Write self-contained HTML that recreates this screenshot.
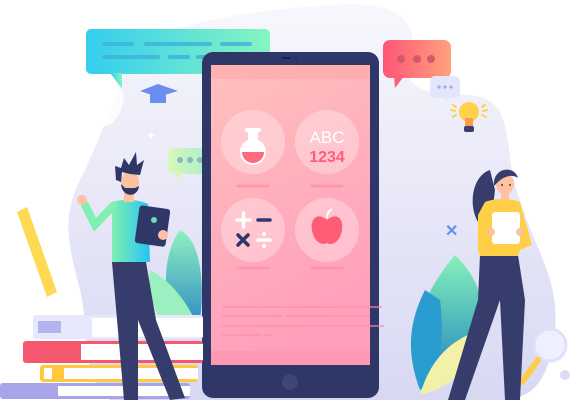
<!DOCTYPE html>
<html><head><meta charset="utf-8"><style>
html,body{margin:0;padding:0;background:#fff;width:576px;height:400px;overflow:hidden}
svg{display:block}
</style></head><body>
<svg width="576" height="400" viewBox="0 0 576 400" xmlns="http://www.w3.org/2000/svg" font-family="Liberation Sans, sans-serif">
<defs>
<linearGradient id="bg" x1="0" y1="0" x2="0" y2="1"><stop offset="0" stop-color="#f7f7fd"/><stop offset="1" stop-color="#d8d8f3"/></linearGradient>
<linearGradient id="scr" x1="0" y1="0" x2="0.3" y2="1"><stop offset="0" stop-color="#ffc0bd"/><stop offset="1" stop-color="#ff9fbb"/></linearGradient>
<linearGradient id="teal" x1="0" y1="0" x2="1" y2="0"><stop offset="0" stop-color="#35cdf0"/><stop offset="1" stop-color="#86f5bf"/></linearGradient>
<linearGradient id="red" x1="0" y1="0" x2="1" y2="0"><stop offset="0" stop-color="#ff5577"/><stop offset="1" stop-color="#ffa27d"/></linearGradient>
<linearGradient id="shirt" x1="0" y1="0" x2="1" y2="0"><stop offset="0" stop-color="#7ef0b0"/><stop offset="1" stop-color="#28c3f5"/></linearGradient>
<linearGradient id="leaf" x1="0" y1="0" x2="0" y2="1"><stop offset="0" stop-color="#86f2b8"/><stop offset="1" stop-color="#2288c0"/></linearGradient>
<linearGradient id="bub2" x1="0" y1="0" x2="1" y2="0"><stop offset="0" stop-color="#d8f7b8"/><stop offset="1" stop-color="#a8eecf"/></linearGradient>
</defs>
<path d="M130 60 C160 20 260 10 330 5 C400 0 420 20 410 60 C400 90 430 95 470 95 C520 100 500 150 520 200 C535 250 560 280 555 330 C550 370 540 400 500 400 L110 400 C80 380 90 330 80 290 C70 250 60 220 80 180 C95 150 110 110 130 60 Z" fill="url(#bg)"/>
<ellipse cx="110" cy="105" rx="12" ry="22" fill="#fff" opacity=".8" transform="rotate(20 110 105)"/>
<rect x="86" y="29" width="184" height="45" rx="5" fill="url(#teal)"/>
<path d="M110 73 L122 73 L122 89 Z" fill="url(#teal)"/>
<g stroke="#3fb4dc" stroke-width="4" stroke-linecap="round" opacity=".85">
<line x1="104" y1="44" x2="132" y2="44"/><line x1="146" y1="44" x2="210" y2="44"/><line x1="222" y1="44" x2="250" y2="44"/>
<line x1="104" y1="57" x2="158" y2="57"/><line x1="170" y1="57" x2="188" y2="57"/><line x1="198" y1="57" x2="228" y2="57"/><line x1="238" y1="57" x2="250" y2="57"/>
</g>
<path d="M140 91 L158 84 L178 91 L158 97 Z" fill="#6b8cf0"/><rect x="150" y="93" width="16" height="10" fill="#6b8cf0"/>
<text x="146" y="140" font-size="12" fill="#fff">✦</text>
<rect x="168" y="148" width="44" height="26" rx="6" fill="url(#bub2)"/>
<path d="M175 172 L183 172 L176 180Z" fill="#d8f7b8"/>
<g fill="#8ab8c0"><circle cx="180" cy="160" r="3"/><circle cx="190" cy="160" r="3"/><circle cx="200" cy="160" r="3"/></g>
<rect x="383" y="40" width="68" height="38" rx="7" fill="url(#red)"/>
<path d="M394 76 L404 76 L395 88Z" fill="#ff5d77"/>
<g fill="#d05a6a"><circle cx="401" cy="59" r="4"/><circle cx="417" cy="59" r="4"/><circle cx="431" cy="59" r="4"/></g>
<rect x="430" y="76" width="30" height="22" rx="5" fill="#e4e6fb"/>
<path d="M442 97 L450 97 L446 101Z" fill="#e4e6fb"/>
<g fill="#a7a9ea"><circle cx="439" cy="87" r="1.6"/><circle cx="445" cy="87" r="1.6"/><circle cx="451" cy="87" r="1.6"/></g>
<circle cx="469" cy="112" r="10" fill="#ffd24a"/><rect x="465" y="118" width="8" height="8" fill="#ff9a4a"/><rect x="464" y="126" width="10" height="6" rx="2" fill="#3a3f70"/>
<g stroke="#ffd24a" stroke-width="2" stroke-linecap="round"><line x1="451" y1="110" x2="455" y2="111"/><line x1="453" y1="117" x2="456" y2="115"/><line x1="483" y1="111" x2="487" y2="110"/><line x1="482" y1="115" x2="486" y2="117"/><line x1="453" y1="105" x2="456" y2="107"/><line x1="482" y1="107" x2="485" y2="105"/></g>
<path d="M455 255 C430 285 410 320 420 370 C440 390 470 360 480 320 C485 290 470 270 455 255Z" fill="url(#leaf)"/>
<path d="M425 290 C410 320 405 350 420 390 C440 380 445 340 440 300Z" fill="#2a9ccf"/>
<path d="M420 395 C430 360 450 340 480 330 C475 360 460 385 420 395Z" fill="#f3f0a8"/>
<circle cx="550" cy="345" r="16" fill="#eef0ff" stroke="#dfe1fa" stroke-width="3"/>
<line x1="538" y1="360" x2="522" y2="382" stroke="#ffcc44" stroke-width="6" stroke-linecap="round"/>
<circle cx="565" cy="375" r="5" fill="#dcdcf5"/>
<text x="445" y="236" font-size="16" font-weight="bold" fill="#6b8cf0">✕</text>
<!-- phone -->
<rect x="202" y="52" width="177" height="346" rx="11" fill="#2f3768"/>
<rect x="211" y="65" width="159" height="300" fill="url(#scr)"/>
<rect x="211" y="65" width="159" height="14" fill="#ffa6a6" opacity=".6"/>
<rect x="211" y="351" width="159" height="14" fill="#ff92b0" opacity=".6"/>
<rect x="282" y="57" width="9" height="2" rx="1" fill="#1c2246"/><circle cx="296" cy="58" r="1" fill="#1c2246"/>
<circle cx="290" cy="382" r="8" fill="#3d4677"/>
<g fill="#fff" opacity=".3"><circle cx="253" cy="142" r="32"/><circle cx="327" cy="142" r="32"/><circle cx="253" cy="230" r="32"/><circle cx="327" cy="230" r="32"/></g>
<g stroke="#ff8ea4" stroke-width="3" stroke-linecap="round" opacity=".7">
<line x1="238" y1="186" x2="268" y2="186"/><line x1="312" y1="186" x2="342" y2="186"/><line x1="238" y1="268" x2="268" y2="268"/><line x1="312" y1="268" x2="342" y2="268"/></g>
<g stroke="#ff8ea4" stroke-width="2" opacity=".6"><line x1="222" y1="307" x2="382" y2="307"/><line x1="222" y1="316" x2="282" y2="316"/><line x1="286" y1="316" x2="370" y2="316"/><line x1="222" y1="326" x2="384" y2="326"/><line x1="222" y1="335" x2="262" y2="335"/><line x1="265" y1="335" x2="272" y2="335"/></g>
<circle cx="253" cy="152" r="13" fill="#fff"/><rect x="248" y="131" width="10" height="12" fill="#fff"/><rect x="245" y="128" width="16" height="4" rx="2" fill="#fff"/>
<path d="M242 152 A11 11 0 0 0 264 152 Z" fill="#ff6b7a"/>
<text x="327" y="143" font-size="17" fill="#fff" text-anchor="middle">ABC</text>
<text x="327" y="162" font-size="16" font-weight="bold" fill="#ff5c77" text-anchor="middle">1234</text>
<g stroke-linecap="round" stroke-width="3.5">
<line x1="237" y1="220" x2="250" y2="220" stroke="#fff"/><line x1="243.5" y1="213" x2="243.5" y2="227" stroke="#fff"/>
<line x1="258" y1="220" x2="270" y2="220" stroke="#2f3768"/>
<line x1="238" y1="235" x2="248" y2="245" stroke="#2f3768"/><line x1="248" y1="235" x2="238" y2="245" stroke="#2f3768"/>
<line x1="258" y1="240" x2="270" y2="240" stroke="#fff"/></g>
<circle cx="264" cy="234" r="2" fill="#fff"/><circle cx="264" cy="246" r="2" fill="#fff"/>
<path d="M327 220 C318 212 310 218 312 230 C314 242 322 246 327 243 C332 246 340 242 342 230 C344 218 336 212 327 220Z" fill="#ff5c77"/>
<path d="M327 218 C327 212 330 210 332 209" stroke="#fff" stroke-width="2" fill="none"/>
<!-- left plant -->
<path d="M180 230 C200 240 205 280 200 320 L175 320 C160 290 165 250 180 230Z" fill="url(#leaf)" opacity=".9"/>
<path d="M150 270 C170 280 185 300 195 320 L160 320 C150 300 148 285 150 270Z" fill="#9cf0c0"/>
<polygon points="17,212 27,207 57,292 47,297" fill="#ffd952"/>
<!-- books -->
<rect x="33" y="315" width="170" height="24" rx="3" fill="#e6e8fb"/><rect x="92" y="318" width="111" height="19" fill="#fff"/><rect x="38" y="321" width="23" height="12" fill="#b3b3f0"/>
<rect x="23" y="341" width="180" height="22" rx="3" fill="#f5576f"/><rect x="81" y="344" width="122" height="16" fill="#fff"/>
<rect x="40" y="365" width="158" height="17" rx="3" fill="#ffc83d"/><rect x="64" y="368" width="134" height="11" fill="#fff"/><rect x="44" y="368" width="8" height="11" fill="#fff"/>
<rect x="0" y="383" width="190" height="16" rx="3" fill="#a8a4ea"/><rect x="58" y="386" width="132" height="10" fill="#fff"/>
<!-- man -->
<path d="M112 262 L146 262 L156 320 L185 398 L170 400 L138 320 L138 400 L124 400 Z" fill="#363c6c"/>
<path d="M112 202 C125 198 140 200 148 204 L150 262 L112 262 Z" fill="url(#shirt)"/>
<path d="M113 206 L95 225 L85 205" stroke="#7ef0b0" stroke-width="8" fill="none" stroke-linecap="round"/>
<circle cx="82" cy="200" r="5" fill="#ffc1a0"/>
<rect x="137" y="207" width="31" height="38" rx="3" fill="#2f3768" transform="rotate(8 152 226)"/>
<circle cx="154" cy="220" r="3" fill="#66e0b0"/>
<circle cx="163" cy="235" r="5" fill="#ffc1a0"/>
<rect x="124" y="190" width="10" height="12" fill="#ffc1a0"/>
<ellipse cx="130" cy="182" rx="9" ry="11" fill="#ffc1a0"/>
<path d="M121 184 C122 198 138 198 139 186 L135 188 L125 188 Z" fill="#2f3768"/>
<path d="M116 180 L115 166 L121 168 L124 158 L129 165 L136 152 L137 165 L144 160 L140 175 L130 174 L122 172 L121 182Z" fill="#2f3768"/>
<!-- woman -->
<path d="M490 170 C472 176 468 205 478 222 L492 215 L495 190 Z" fill="#363c6c"/>
<path d="M480 255 L518 255 L525 300 L520 400 L505 400 L500 300 L465 400 L448 400 L478 300 Z" fill="#363c6c"/>
<path d="M485 202 C495 198 510 198 520 202 L532 245 L520 250 L518 256 L480 256 L478 250 L478 215Z" fill="#ffcf48"/>
<rect x="492" y="212" width="28" height="32" rx="3" fill="#fff"/>
<circle cx="491" cy="232" r="4" fill="#ffc1a0"/><circle cx="520" cy="232" r="4" fill="#ffc1a0"/>
<rect x="501" y="190" width="8" height="10" fill="#ffc1a0"/>
<ellipse cx="505" cy="184" rx="9" ry="10" fill="#ffc1a0"/>
<path d="M494 186 C492 168 514 164 518 178 C512 174 504 176 498 182 Z" fill="#363c6c"/>
<circle cx="502" cy="185" r="1" fill="#363c6c"/><circle cx="510" cy="185" r="1" fill="#363c6c"/>
</svg>
</body></html>
